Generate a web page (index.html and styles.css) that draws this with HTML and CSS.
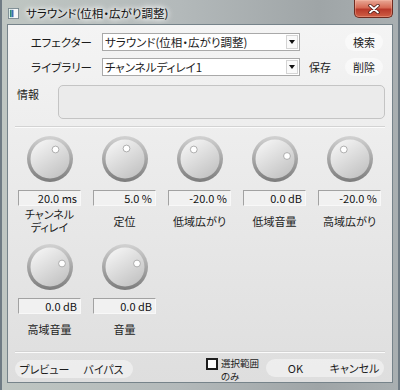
FILE: index.html
```html
<!DOCTYPE html>
<html lang="ja">
<head>
<meta charset="utf-8">
<title>サラウンド(位相・広がり調整)</title>
<link rel="stylesheet" href="styles.css">
</head>
<body>
<svg class="defs" width="0" height="0" aria-hidden="true">
  <defs>
    <linearGradient id="kOuter" x1="0" y1="0" x2="0" y2="1">
      <stop offset="0" stop-color="#d2d2d2"/>
      <stop offset="1" stop-color="#7c7c7c"/>
    </linearGradient>
    <linearGradient id="kFace" x1="0.2" y1="0.05" x2="0.8" y2="0.95">
      <stop offset="0" stop-color="#f3f3f3"/>
      <stop offset="1" stop-color="#c3c3c3"/>
    </linearGradient>
  </defs>
</svg>
<div class="window">
  <div class="titlebar">
    <svg class="appicon" viewBox="0 0 12 12">
      <rect x="0.5" y="0.5" width="11" height="11" fill="#f8f8f8" stroke="#7a8a90"/>
      <rect x="2" y="2" width="2" height="8" fill="#2b8c76"/>
      <rect x="4" y="2" width="2" height="8" fill="#3d6fb4"/>
    </svg>
    <span class="title">サラウンド(位相・広がり調整)</span>
    <div class="close">
      <svg viewBox="0 0 14 10" width="14" height="10">
        <path d="M3 1.5 L11 8.5 M11 1.5 L3 8.5" stroke="#4a1a14" stroke-width="3.4" stroke-linecap="round"/>
        <path d="M3 1.5 L11 8.5 M11 1.5 L3 8.5" stroke="#ffffff" stroke-width="1.8" stroke-linecap="round"/>
      </svg>
    </div>
  </div>
  <div class="client">
    <div class="row">
      <span class="lbl">エフェクター</span>
      <div class="combo"><span class="combo-text">サラウンド(位相・広がり調整)</span><span class="arrow"><svg viewBox="0 0 6 4" width="6" height="4"><path d="M0 0 H6 L3 4 Z" fill="#111"/></svg></span></div>
      <span class="flat"></span>
      <span class="pill">検索</span>
    </div>
    <div class="row">
      <span class="lbl">ライブラリー</span>
      <div class="combo"><span class="combo-text">チャンネルディレイ1</span><span class="arrow"><svg viewBox="0 0 6 4" width="6" height="4"><path d="M0 0 H6 L3 4 Z" fill="#111"/></svg></span></div>
      <span class="flat">保存</span>
      <span class="pill">削除</span>
    </div>
    <div class="info-row">
      <span class="info-lbl">情報</span>
      <div class="info-box"></div>
    </div>
    <div class="sep"></div>
    <div class="knobs">
      <div class="cell">
        <svg class="knob" viewBox="0 0 46 46"><circle cx="23" cy="23" r="23" fill="url(#kOuter)"/><circle cx="23" cy="23" r="19.5" fill="url(#kFace)"/><circle cx="28.5" cy="13.5" r="3.4" fill="#fff" stroke="#9c9c9c" stroke-width="0.8"/></svg>
        <div class="val">20.0 ms</div>
        <div class="cap"><span class="cap-line">チャンネル</span><span class="cap-line">ディレイ</span></div>
      </div>
      <div class="cell">
        <svg class="knob" viewBox="0 0 46 46"><circle cx="23" cy="23" r="23" fill="url(#kOuter)"/><circle cx="23" cy="23" r="19.5" fill="url(#kFace)"/><circle cx="24.5" cy="12.5" r="3.4" fill="#fff" stroke="#9c9c9c" stroke-width="0.8"/></svg>
        <div class="val">5.0 %</div>
        <div class="cap">定位</div>
      </div>
      <div class="cell">
        <svg class="knob" viewBox="0 0 46 46"><circle cx="23" cy="23" r="23" fill="url(#kOuter)"/><circle cx="23" cy="23" r="19.5" fill="url(#kFace)"/><circle cx="16.8" cy="13.5" r="3.4" fill="#fff" stroke="#9c9c9c" stroke-width="0.8"/></svg>
        <div class="val">-20.0 %</div>
        <div class="cap">低域広がり</div>
      </div>
      <div class="cell">
        <svg class="knob" viewBox="0 0 46 46"><circle cx="23" cy="23" r="23" fill="url(#kOuter)"/><circle cx="23" cy="23" r="19.5" fill="url(#kFace)"/><circle cx="35" cy="20" r="3.4" fill="#fff" stroke="#9c9c9c" stroke-width="0.8"/></svg>
        <div class="val">0.0 dB</div>
        <div class="cap">低域音量</div>
      </div>
      <div class="cell">
        <svg class="knob" viewBox="0 0 46 46"><circle cx="23" cy="23" r="23" fill="url(#kOuter)"/><circle cx="23" cy="23" r="19.5" fill="url(#kFace)"/><circle cx="16.8" cy="13.5" r="3.4" fill="#fff" stroke="#9c9c9c" stroke-width="0.8"/></svg>
        <div class="val">-20.0 %</div>
        <div class="cap">高域広がり</div>
      </div>
      <div class="cell">
        <svg class="knob" viewBox="0 0 46 46"><circle cx="23" cy="23" r="23" fill="url(#kOuter)"/><circle cx="23" cy="23" r="19.5" fill="url(#kFace)"/><circle cx="35" cy="19.5" r="3.4" fill="#fff" stroke="#9c9c9c" stroke-width="0.8"/></svg>
        <div class="val">0.0 dB</div>
        <div class="cap">高域音量</div>
      </div>
      <div class="cell">
        <svg class="knob" viewBox="0 0 46 46"><circle cx="23" cy="23" r="23" fill="url(#kOuter)"/><circle cx="23" cy="23" r="19.5" fill="url(#kFace)"/><circle cx="35" cy="19.5" r="3.4" fill="#fff" stroke="#9c9c9c" stroke-width="0.8"/></svg>
        <div class="val">0.0 dB</div>
        <div class="cap">音量</div>
      </div>
    </div>
    <div class="sep sep2"></div>
    <div class="bottom">
      <div class="pillgroup pg-left"><span class="pb">プレビュー</span><span class="pb">バイパス</span></div>
      <div class="check"><span class="box"></span><span class="check-text"><span class="ct-line">選択範囲</span><span class="ct-line">のみ</span></span></div>
      <div class="pillgroup pg-right"><span class="pb">OK</span><span class="pb">キャンセル</span></div>
    </div>
  </div>
</div>
</body>
</html>
```
FILE: styles.css
```css
html, body {
  margin: 0;
  padding: 0;
}
body {
  width: 400px;
  height: 390px;
  overflow: hidden;
  font-family: "Noto Sans CJK JP", "Noto Sans", sans-serif;
  font-size: 11px;
  font-feature-settings: "palt";
  color: #1c1c1c;
}
.defs {
  position: absolute;
  width: 0;
  height: 0;
}
.window {
  width: 400px;
  height: 390px;
  box-sizing: border-box;
  display: flex;
  flex-direction: column;
  background: linear-gradient(90deg, #bfc6c2 0%, #b3b9ba 45%, #9fa5a7 80%, #a9afb1 100%);
  border-left: 2px solid #6f7b84;
  border-right: 2px solid #6f7b84;
}
.titlebar {
  height: 24px;
  display: flex;
  align-items: flex-start;
}
.appicon {
  width: 11px;
  height: 11px;
  margin: 8px 0 0 6px;
}
.title {
  margin: 5px 0 0 7px;
  line-height: 16px;
  font-size: 11.5px;
  color: #111;
  text-shadow: 0 0 4px #fff, 0 0 6px #fff, 0 0 8px rgba(255,255,255,0.8);
}
.close {
  margin-left: auto;
  margin-right: 5px;
  width: 39px;
  height: 18px;
  box-sizing: border-box;
  border: 1px solid #6e2b20;
  border-top: none;
  border-radius: 0 0 5px 5px;
  background: linear-gradient(#e9a896 0%, #d66a55 45%, #b8392a 55%, #cf5f45 100%);
  box-shadow: inset 0 0 0 1px rgba(255,200,180,0.35);
  display: flex;
  align-items: center;
  justify-content: center;
}
.client {
  margin: 0 5px;
  height: 359px;
  box-sizing: border-box;
  border: 1px solid #76838a;
  background: linear-gradient(#f4f4f4, #dedede);
  display: flex;
  flex-direction: column;
  padding-top: 8px;
}
.row {
  display: flex;
  align-items: center;
  height: 18px;
}
.row + .row {
  margin-top: 7px;
}
.lbl {
  width: 70px;
  margin-left: 14px;
  text-align: right;
  line-height: 18px;
  font-size: 11.5px;
}
.combo {
  margin-left: 10px;
  width: 198px;
  height: 18px;
  box-sizing: border-box;
  border: 1px solid #a9a9a9;
  background: #fff;
  display: flex;
  align-items: center;
  padding-left: 2px;
}
.combo-text {
  flex: 1;
  line-height: 16px;
  font-size: 11.5px;
  white-space: nowrap;
  overflow: hidden;
}
.arrow {
  width: 12px;
  height: 14px;
  box-sizing: border-box;
  border: 1px solid #d4d4d4;
  margin-right: 1px;
  background: #fafafa;
  display: flex;
  align-items: center;
  justify-content: center;
}
.flat {
  width: 36px;
  margin-left: 2px;
  text-align: center;
  line-height: 18px;
}
.pill {
  margin-left: 7px;
  width: 38px;
  height: 18px;
  border-radius: 9px;
  background: rgba(255,255,255,0.5);
  text-align: center;
  line-height: 18px;
}
.info-row {
  margin-top: 9px;
  height: 34px;
  display: flex;
  padding-left: 9px;
}
.info-lbl {
  width: 41px;
  line-height: 16px;
  padding-top: 1px;
}
.info-box {
  width: 327px;
  height: 34px;
  box-sizing: border-box;
  border: 1px solid #c4c4c4;
  border-radius: 5px;
  background: #ebebeb;
}
.sep {
  margin: 7px 7px 0 7px;
  height: 1px;
  background: #d3d3d3;
  border-bottom: 1px solid #fbfbfb;
}
.sep2 {
  margin-top: 9px;
}
.knobs {
  margin: 8px 0 0 10px;
  display: grid;
  grid-template-columns: repeat(5, 63px);
  column-gap: 12px;
  row-gap: 10px;
}
.cell {
  display: flex;
  flex-direction: column;
  align-items: center;
}
.knob {
  width: 46px;
  height: 46px;
}
.val {
  margin-top: 8px;
  width: 63px;
  height: 16px;
  box-sizing: border-box;
  border: 1px solid #a2a2a2;
  border-right-color: #f8f8f8;
  border-bottom-color: #f8f8f8;
  background: #f1f1f1;
  text-align: right;
  padding-right: 3px;
  line-height: 14px;
  color: #111;
}
.cap {
  margin-top: 2px;
  height: 26px;
  line-height: 13px;
  display: flex;
  flex-direction: column;
  align-items: center;
  justify-content: center;
  text-align: center;
  white-space: nowrap;
}
.cap-line {
  display: block;
  height: 13px;
  line-height: 13px;
}
.bottom {
  margin-top: 4px;
  height: 25px;
  display: flex;
  align-items: flex-start;
  padding: 0 8px 0 7px;
}
.pillgroup {
  display: flex;
  height: 18px;
  border-radius: 9px;
  background: rgba(255,255,255,0.45);
}
.pb {
  width: 59px;
  text-align: center;
  line-height: 18px;
}
.pg-left {
  margin-top: 3px;
}
.check {
  margin-left: auto;
  width: 53px;
  display: flex;
  align-items: flex-start;
}
.box {
  width: 12px;
  height: 12px;
  box-sizing: border-box;
  border: 2px solid #1e1e1e;
  background: #fff;
  margin-top: 1px;
  flex: none;
}
.check-text {
  margin-left: 3px;
  font-size: 9.5px;
  white-space: nowrap;
  display: flex;
  flex-direction: column;
}
.ct-line {
  display: block;
  height: 13px;
  line-height: 13px;
}
.pg-right {
  margin-left: 7px;
  margin-top: 2px;
}
```
